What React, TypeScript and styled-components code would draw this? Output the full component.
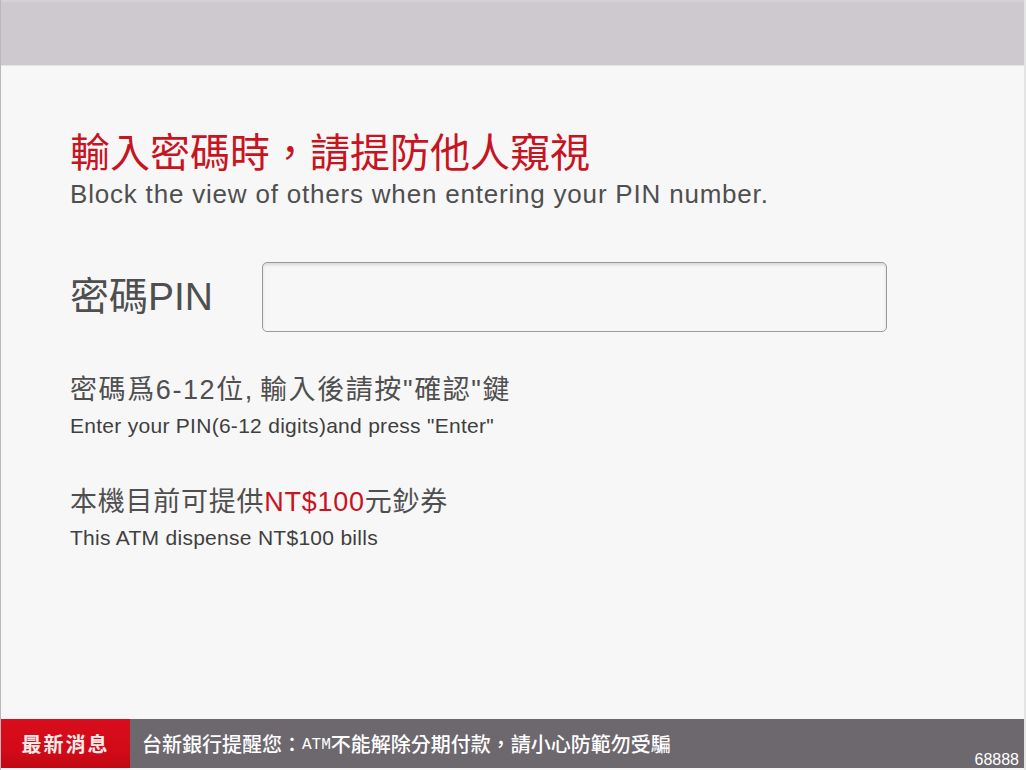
import React from "react";
import styled, { createGlobalStyle } from "styled-components";

const Global = createGlobalStyle`
  html, body { margin: 0; padding: 0; background: #f7f7f7; }
  body { font-family: "Liberation Sans", "Noto Sans CJK TC", Arial, sans-serif; }
`;

const Screen = styled.div`
  width: 1026px;
  height: 770px;
  box-sizing: border-box;
  display: flex;
  flex-direction: column;
  background: #f7f7f7;
  border-left: 1px solid #b9b9b9;
  border-right: 2px solid #e4e4e4;
  overflow: hidden;
`;

const Header = styled.div`
  height: 66px;
  flex: none;
  background: #cec8cf;
  border-top: 2px solid #d6d1d8;
  box-sizing: border-box;
  border-bottom: 1px solid #e6e3e7;
`;

const Main = styled.main`
  flex: 1;
  display: flex;
  flex-direction: column;
  padding: 0 0 0 69px;
`;

const Title = styled.h1`
  margin: 65px 0 0;
  font-weight: normal;
  font-size: 40px;
  line-height: 44px;
  color: #c8141f;
`;

const Subtitle = styled.p`
  margin: 4px 0 0;
  font-size: 26px;
  line-height: 30px;
  letter-spacing: 0.8px;
  color: #4f4f4f;
`;

const PinRow = styled.div`
  display: flex;
  align-items: center;
  margin-top: 53px;
`;

const PinLabel = styled.label`
  width: 192px;
  font-size: 39px;
  line-height: 70px;
  color: #4f4f4f;
`;

const PinBox = styled.div`
  width: 625px;
  height: 70px;
  box-sizing: border-box;
  border: 1px solid #9a9a9a;
  border-radius: 5px;
  background: #f7f7f7;
  box-shadow: inset 0 2px 3px rgba(0, 0, 0, 0.12);
`;

const Block = styled.div<{ $top: number }>`
  margin-top: ${(p) => p.$top}px;
  display: flex;
  flex-direction: column;
`;

const ZhLine = styled.div<{ $spacing: number }>`
  font-size: 27px;
  line-height: 32px;
  letter-spacing: ${(p) => p.$spacing}px;
  color: #4f4f4f;
`;

const Comma = styled.span`
  margin-right: 6px;
`;

const EnLine = styled.div`
  margin-top: 6px;
  font-size: 21px;
  line-height: 27px;
  letter-spacing: 0.28px;
  color: #3f3f3f;
`;

const Red = styled.span`
  color: #c8141f;
`;

const Footer = styled.footer`
  height: 49px;
  flex: none;
  margin-bottom: 2px;
  display: flex;
  align-items: stretch;
  background: #6d676e;
  position: relative;
`;

const NewsTag = styled.div`
  width: 129px;
  display: flex;
  align-items: center;
  justify-content: center;
  background: linear-gradient(180deg, #d90d1d 0%, #d00a17 70%, #bf0812 100%);
  color: #fbeaea;
  font-size: 20px;
  font-weight: bold;
  letter-spacing: 2px;
  font-family: "Noto Sans CJK TC", sans-serif;
`;

const Ticker = styled.div`
  display: flex;
  align-items: center;
  padding-left: 12px;
  color: #ffffff;
  font-size: 20px;
  font-family: "Noto Sans CJK TC", sans-serif;
  font-weight: 500;
`;

const Mono = styled.span`
  font-family: "Liberation Mono", "DejaVu Sans Mono", monospace;
  font-size: 16px;
  font-weight: normal;
  padding-top: 3px;
`;

const Code = styled.div`
  position: absolute;
  right: 5px;
  bottom: 0;
  color: #ffffff;
  font-size: 16px;
  line-height: 16px;
  font-family: "Liberation Sans Narrow", "Liberation Sans", sans-serif;
`;

export default function App() {
  return (
    <>
      <Global />
      <Screen>
        <Header />
        <Main>
          <Title>輸入密碼時，請提防他人窺視</Title>
          <Subtitle>Block the view of others when entering your PIN number.</Subtitle>
          <PinRow>
            <PinLabel>密碼PIN</PinLabel>
            <PinBox />
          </PinRow>
          <Block $top={42}>
            <ZhLine $spacing={1.6}>
              密碼爲6-12位<Comma>,</Comma>輸入後請按"確認"鍵
            </ZhLine>
            <EnLine>Enter your PIN(6-12 digits)and press "Enter"</EnLine>
          </Block>
          <Block $top={47}>
            <ZhLine $spacing={0.75}>
              本機目前可提供<Red>NT$100</Red>元鈔券
            </ZhLine>
            <EnLine>This ATM dispense NT$100 bills</EnLine>
          </Block>
        </Main>
        <Footer>
          <NewsTag>最新消息</NewsTag>
          <Ticker>
            台新銀行提醒您：<Mono>ATM</Mono>不能解除分期付款，請小心防範勿受騙
          </Ticker>
          <Code>68888</Code>
        </Footer>
      </Screen>
    </>
  );
}
